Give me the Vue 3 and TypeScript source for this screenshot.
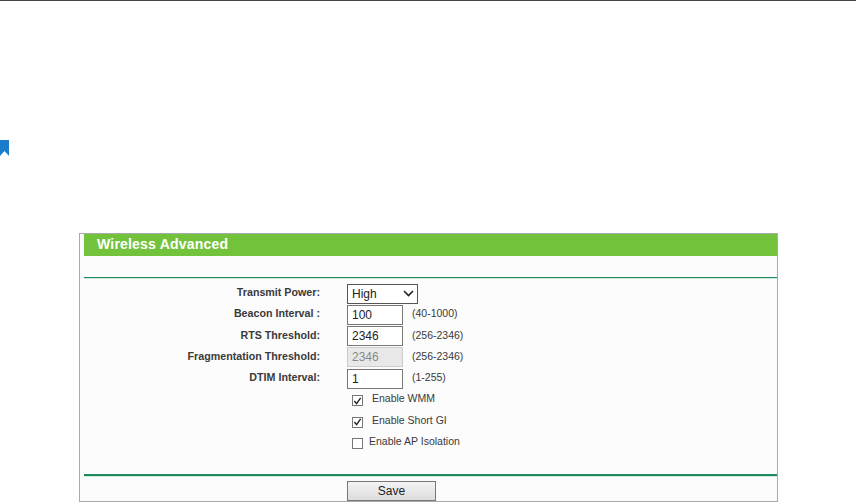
<script setup lang="ts">
interface Row { label: string; value: string; hint: string; disabled?: boolean }
const rows: Row[] = [
  { label: 'Beacon Interval :', value: '100', hint: '(40-1000)' },
  { label: 'RTS Threshold:', value: '2346', hint: '(256-2346)' },
  { label: 'Fragmentation Threshold:', value: '2346', hint: '(256-2346)', disabled: true },
  { label: 'DTIM Interval:', value: '1', hint: '(1-255)' },
]
const checks = [
  { label: 'Enable WMM', checked: true, gap: 'wide' },
  { label: 'Enable Short GI', checked: true, gap: 'wide' },
  { label: 'Enable AP Isolation', checked: false, gap: 'narrow' },
]
</script>

<template>
  <div class="page">
    <div class="topline"></div>
    <svg class="bookmark" width="10" height="16" viewBox="0 0 10 16">
      <path d="M0 0H9V16L4.5 11L0 16Z" fill="#1a7ccb" />
    </svg>
    <section class="panel">
      <div class="title"><span>Wireless Advanced</span></div>
      <div class="rule top"></div>
      <div class="form">
        <div class="row">
          <div class="label">Transmit Power:</div>
          <div class="fake-select"><span>High</span>
            <svg width="11" height="7" viewBox="0 0 11 7"><path d="M1 1L5.5 5.5L10 1" fill="none" stroke="#222" stroke-width="1.6" /></svg>
          </div>
        </div>
        <div v-for="r in rows" :key="r.label" class="row">
          <div class="label">{{ r.label }}</div>
          <div class="field" :class="{ disabled: r.disabled }">{{ r.value }}</div>
          <div class="hint">{{ r.hint }}</div>
        </div>
        <div v-for="c in checks" :key="c.label" class="check-row" :class="c.gap">
          <span class="box">
            <svg v-if="c.checked" width="10" height="10" viewBox="0 0 10 10"><path d="M1.5 5L4 8L8.5 1.5" fill="none" stroke="#222" stroke-width="1.5" /></svg>
          </span>
          <span class="check-label">{{ c.label }}</span>
        </div>
      </div>
      <div class="rule bottom"></div>
      <div class="actions"><button class="save" type="button">Save</button></div>
    </section>
  </div>
</template>

<style>
html, body { margin: 0; background: #fff; }
</style>

<style scoped>
.page { width: 856px; height: 502px; overflow: hidden; position: relative; font-family: "Liberation Sans", Arial, sans-serif; color: #222; }
.topline { height: 1px; background: #444; }
.bookmark { display: block; margin-top: 139px; }
.panel { margin: 77px 0 0 79px; width: 693px; height: 267px; border: 1px solid #aaa; background: #fcfcfc; padding-left: 4px; }
.title { height: 22px; background: #72c23c; color: #fff; font-weight: bold; font-size: 14px; letter-spacing: .2px; line-height: 20px; padding-left: 13px; }
.rule { height: 1px; background: #1f8a5b; box-shadow: 0 1px 0 #cfe6da; }
.rule.top { margin-top: 21px; }
.rule.bottom { height: 2px; }
.form { height: 196px; padding-top: 5px; box-sizing: border-box; }
.row { display: flex; align-items: center; height: 21.25px; }
.label { width: 236px; text-align: right; font-size: 10.7px; font-weight: bold; color: #3a3a3a; flex: none; margin-top: -3px; }
.fake-select { margin-left: 27px; height: 18px; border: 1px solid #555; background: #fff; display: flex; align-items: center; justify-content: space-between; padding: 0 3px 0 4px; font-size: 12px; color: #222; width: 62px; }
.field { margin-left: 27px; width: 50px; height: 18px; border: 1px solid #777; background: #fff; padding-left: 4px; font-size: 12px; line-height: 18px; color: #222; }
.field.disabled { background: #e8e8e8; border-color: #ccc; color: #888; }
.hint { margin-left: 9px; font-size: 10.5px; color: #3a3a3a; margin-top: -3px; }
.check-row { display: flex; align-items: center; height: 21.25px; margin-left: 264px; padding-left: 4px; font-size: 10.5px; color: #3a3a3a; }
.box { width: 9px; height: 9px; border: 1px solid #777; background: #fff; display: flex; align-items: center; justify-content: center; flex: none; margin-top: 2px; }
.wide .box { margin-right: 9px; }
.narrow .box { margin-right: 6px; }
.check-label { margin-top: -3px; }
.actions { display: flex; padding-left: 263px; padding-top: 5px; }
.save { width: 89px; height: 20px; padding: 0; border: 1px solid #777; background: linear-gradient(#f4f4f4, #dcdcdc); font-family: inherit; font-size: 12px; color: #222; }
</style>
